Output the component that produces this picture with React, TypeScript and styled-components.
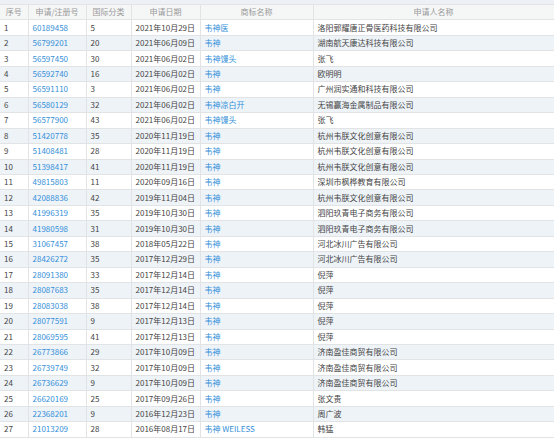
import React from "react";
import styled, { createGlobalStyle } from "styled-components";

const Global = createGlobalStyle`
  html, body { margin: 0; padding: 0; background: #ffffff; }
  body { font-family: "Noto Sans CJK SC", "Noto Sans", sans-serif; }
`;

const Page = styled.div`
  width: 554px;
  height: 439px;
  overflow: hidden;
  background: #ffffff;
`;

const TopStrip = styled.div`
  height: 4px;
  background: #edf1f6;
`;

const Table = styled.table`
  width: 554px;
  table-layout: fixed;
  border-collapse: collapse;
  font-size: 8px;
  line-height: 1;
`;

const HeadCell = styled.th`
  height: 14.46px;
  padding: 0;
  font-weight: normal;
  color: #999999;
  background: #f5f6f6;
  text-align: center;
  border: 1px solid #e1e3e4;
  border-left: none;
  &:not(:first-child) { border-left: 1px solid #e1e3e4; }
  white-space: nowrap;
`;

const Row = styled.tr<{ $even: boolean }>`
  background: ${(p) => (p.$even ? "#eef3f8" : "#ffffff")};
`;

const Cell = styled.td<{ $link?: boolean }>`
  height: 14.46px;
  padding: 0 0 0 4px;
  color: ${(p) => (p.$link ? "#3590d8" : "#444444")};
  border-top: 1px solid #e1e3e4;
  border-bottom: 1px solid #e1e3e4;
  &:not(:first-child) { border-left: 1px solid #e1e3e4; }
  white-space: nowrap;
  overflow: hidden;
`;

const cols = [28, 58, 45, 69, 113, 241];
const headers = ["序号", "申请/注册号", "国际分类", "申请日期", "商标名称", "申请人名称"];

const rows: [string, string, string, string, string][] = [
  ["60189458", "5", "2021年10月29日", "韦神医", "洛阳郭耀唐正骨医药科技有限公司"],
  ["56799201", "20", "2021年06月09日", "韦神", "湖南航天康达科技有限公司"],
  ["56597450", "30", "2021年06月02日", "韦神馒头", "张飞"],
  ["56592740", "16", "2021年06月02日", "韦神", "欧明明"],
  ["56591110", "3", "2021年06月02日", "韦神", "广州润实通和科技有限公司"],
  ["56580129", "32", "2021年06月02日", "韦神凉白开", "无锡赢海金属制品有限公司"],
  ["56577900", "43", "2021年06月02日", "韦神馒头", "张飞"],
  ["51420778", "35", "2020年11月19日", "韦神", "杭州韦朕文化创意有限公司"],
  ["51408481", "28", "2020年11月19日", "韦神", "杭州韦朕文化创意有限公司"],
  ["51398417", "41", "2020年11月19日", "韦神", "杭州韦朕文化创意有限公司"],
  ["49815803", "11", "2020年09月16日", "韦神", "深圳市枫桦教育有限公司"],
  ["42088836", "42", "2019年11月04日", "韦神", "杭州韦朕文化创意有限公司"],
  ["41996319", "35", "2019年10月30日", "韦神", "泗阳玖青电子商务有限公司"],
  ["41980598", "31", "2019年10月30日", "韦神", "泗阳玖青电子商务有限公司"],
  ["31067457", "38", "2018年05月22日", "韦神", "河北冰川广告有限公司"],
  ["28426272", "35", "2017年12月29日", "韦神", "河北冰川广告有限公司"],
  ["28091380", "33", "2017年12月14日", "韦神", "倪萍"],
  ["28087683", "35", "2017年12月14日", "韦神", "倪萍"],
  ["28083038", "38", "2017年12月14日", "韦神", "倪萍"],
  ["28077591", "9", "2017年12月13日", "韦神", "倪萍"],
  ["28069595", "41", "2017年12月13日", "韦神", "倪萍"],
  ["26773866", "29", "2017年10月09日", "韦神", "济南盈佳商贸有限公司"],
  ["26739749", "32", "2017年10月09日", "韦神", "济南盈佳商贸有限公司"],
  ["26736629", "9", "2017年10月09日", "韦神", "济南盈佳商贸有限公司"],
  ["26620169", "25", "2017年09月26日", "韦神", "张文贵"],
  ["22368201", "9", "2016年12月23日", "韦神", "周广波"],
  ["21013209", "28", "2016年08月17日", "韦神 WEILESS", "韩猛"],
];

export default function App() {
  return (
    <Page>
      <Global />
      <TopStrip />
      <Table>
        <colgroup>
          {cols.map((w, i) => (
            <col key={i} style={{ width: w }} />
          ))}
        </colgroup>
        <thead>
          <tr>
            {headers.map((h) => (
              <HeadCell key={h}>{h}</HeadCell>
            ))}
          </tr>
        </thead>
        <tbody>
          {rows.map((r, i) => (
            <Row key={i} $even={i % 2 === 1}>
              <Cell>{i + 1}</Cell>
              <Cell $link>{r[0]}</Cell>
              <Cell>{r[1]}</Cell>
              <Cell>{r[2]}</Cell>
              <Cell $link>{r[3]}</Cell>
              <Cell>{r[4]}</Cell>
            </Row>
          ))}
        </tbody>
      </Table>
    </Page>
  );
}
